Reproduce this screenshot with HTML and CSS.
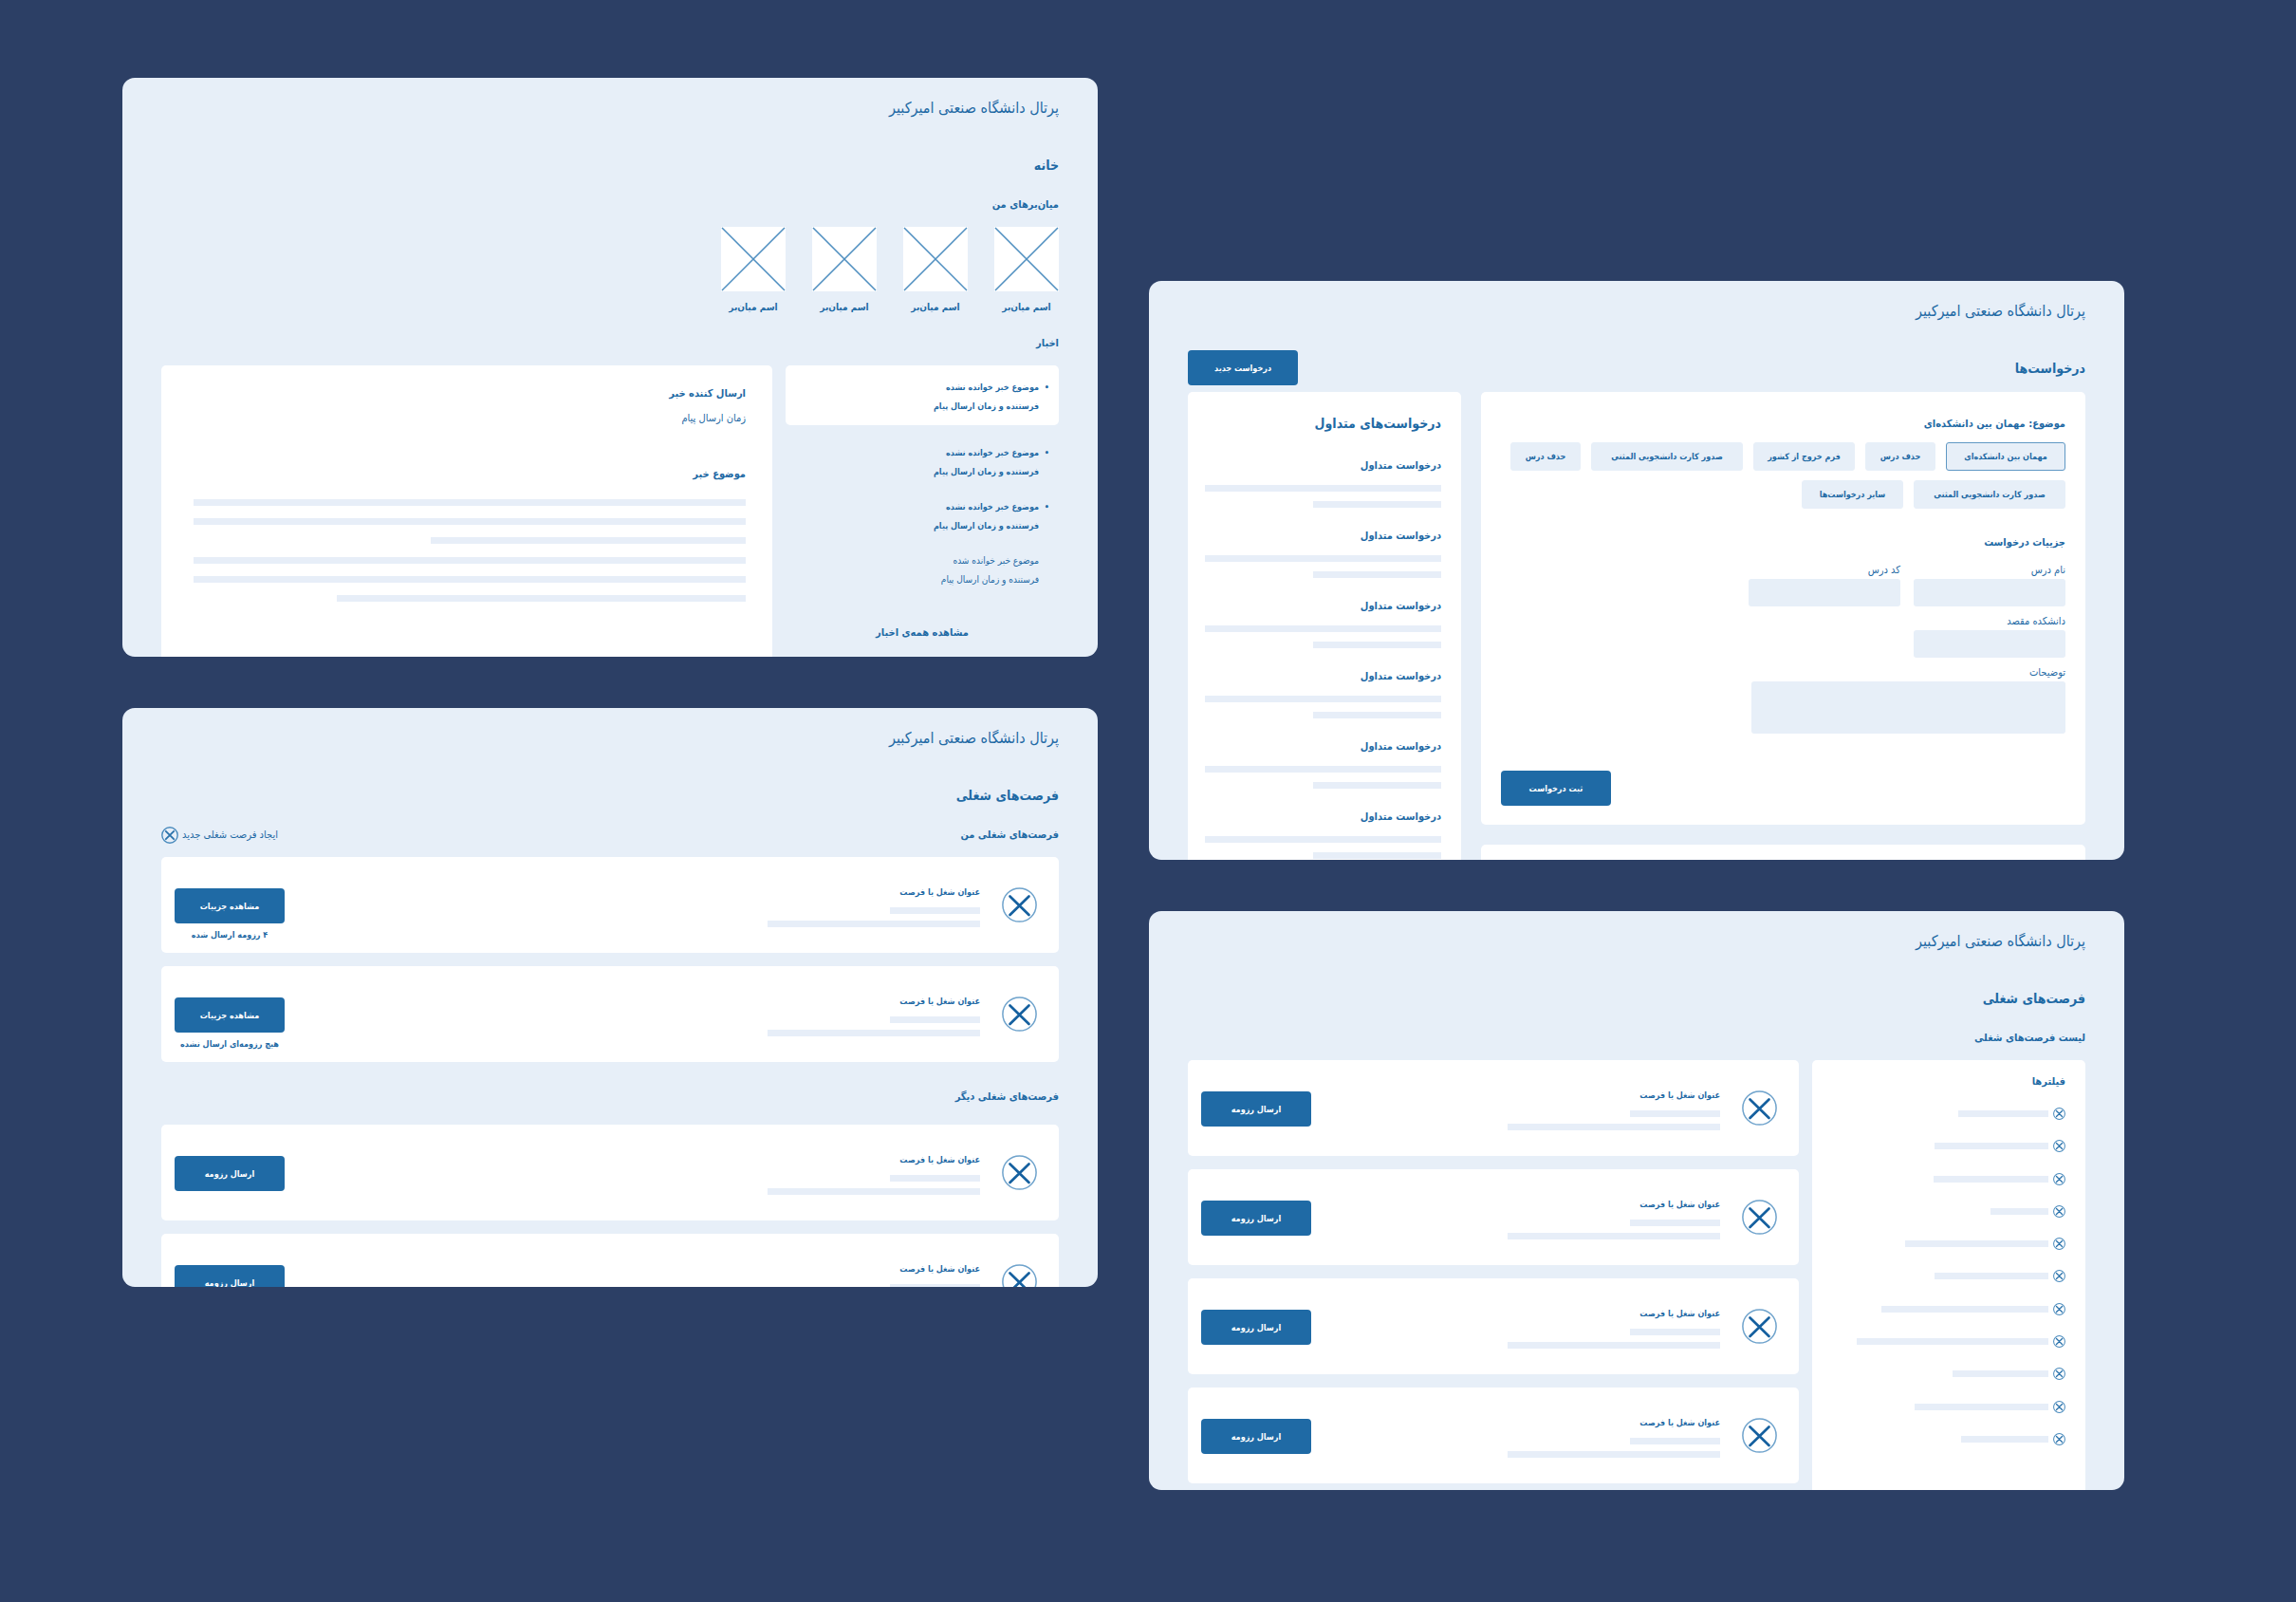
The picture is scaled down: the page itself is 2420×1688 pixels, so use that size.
FILE: index.html
```html
<!DOCTYPE html>
<html lang="fa" dir="rtl">
<head>
    <meta charset="UTF-8">
    <meta name="viewport" content="width=device-width, initial-scale=1.0">
    <title>پرتال دانشگاه صنعتی امیرکبیر</title>
    <link rel="stylesheet" href="styles.css">
</head>
<body>

    <svg class="defs" aria-hidden="true">
        <symbol id="cross" viewBox="0 0 37 37">
            <circle cx="18.5" cy="18.5" r="17.6" fill="none" stroke="#6fa3cc" stroke-width="1.5"/>
            <path d="M8.5 9.5 28.5 29M28.5 9.5 8.5 29" fill="none" stroke="#15609f" stroke-width="2.7" stroke-linecap="round"/>
        </symbol>
        <symbol id="cross-small" viewBox="0 0 18 18">
            <circle cx="9" cy="9" r="8.2" fill="none" stroke="#4a8bbd" stroke-width="1.4"/>
            <path d="M4.8 4.8 13.2 13.2M13.2 4.8 4.8 13.2" fill="none" stroke="#2a72ab" stroke-width="1.8" stroke-linecap="round"/>
        </symbol>
        <symbol id="placeholder" viewBox="0 0 68 68">
            <path d="M1 1 67 67M67 1 1 67" fill="none" stroke="#4f8fc0" stroke-width="1.5"/>
        </symbol>
    </svg>

    <main class="board">
        <div class="column column-low">

            <!-- Requests -->
            <section class="panel">
                <header class="portal-name">پرتال دانشگاه صنعتی امیرکبیر</header>
                <div class="page-head">
                    <h1>درخواست‌ها</h1>
                    <button class="btn" type="button">درخواست جدید</button>
                </div>
                <div class="requests">
                    <div class="requests-main">
                        <form class="card request-form">
                            <h2>موضوع: مهمان بین دانشکده‌ای</h2>
                            <div class="chips">
                                <button class="chip chip-active" type="button">مهمان بین دانشکده‌ای</button>
                                <button class="chip chip-sm" type="button">حذف درس</button>
                                <button class="chip chip-md" type="button">فرم خروج از کشور</button>
                                <button class="chip chip-lg" type="button">صدور کارت دانشجویی المثنی</button>
                                <button class="chip chip-sm" type="button">حذف درس</button>
                                <button class="chip chip-lg" type="button">صدور کارت دانشجویی المثنی</button>
                                <button class="chip chip-md" type="button">سایر درخواست‌ها</button>
                            </div>
                            <h2>جزییات درخواست</h2>
                            <div class="fields">
                                <div class="field-row">
                                    <div class="field">
                                        <label for="course-name">نام درس</label>
                                        <input id="course-name" type="text">
                                    </div>
                                    <div class="field">
                                        <label for="course-code">کد درس</label>
                                        <input id="course-code" type="text">
                                    </div>
                                </div>
                                <div class="field">
                                    <label for="faculty">دانشکده مقصد</label>
                                    <input id="faculty" type="text">
                                </div>
                                <div class="field field-wide">
                                    <label for="notes">توضیحات</label>
                                    <textarea id="notes"></textarea>
                                </div>
                            </div>
                            <button class="btn btn-submit" type="submit">ثبت درخواست</button>
                        </form>
                        <div class="card card-next"></div>
                    </div>
                    <aside class="card common">
                        <h2 class="common-title">درخواست‌های متداول</h2>
                        <ul class="common-list">
                            <li><h3>درخواست متداول</h3><span class="bar"></span><span class="bar bar-short"></span></li>
                            <li><h3>درخواست متداول</h3><span class="bar"></span><span class="bar bar-short"></span></li>
                            <li><h3>درخواست متداول</h3><span class="bar"></span><span class="bar bar-short"></span></li>
                            <li><h3>درخواست متداول</h3><span class="bar"></span><span class="bar bar-short"></span></li>
                            <li><h3>درخواست متداول</h3><span class="bar"></span><span class="bar bar-short"></span></li>
                            <li><h3>درخواست متداول</h3><span class="bar"></span><span class="bar bar-short"></span></li>
                        </ul>
                    </aside>
                </div>
            </section>

            <!-- Job list with filters -->
            <section class="panel">
                <header class="portal-name">پرتال دانشگاه صنعتی امیرکبیر</header>
                <div class="page-head">
                    <h1>فرصت‌های شغلی</h1>
                </div>
                <h2 class="section-title">لیست فرصت‌های شغلی</h2>
                <div class="split">
                    <aside class="card filters">
                        <h3>فیلترها</h3>
                        <ul>
                            <li><svg class="icon-xs"><use href="#cross-small"/></svg><span class="bar" style="width: 95px"></span></li>
                            <li><svg class="icon-xs"><use href="#cross-small"/></svg><span class="bar" style="width: 120px"></span></li>
                            <li><svg class="icon-xs"><use href="#cross-small"/></svg><span class="bar" style="width: 121px"></span></li>
                            <li><svg class="icon-xs"><use href="#cross-small"/></svg><span class="bar" style="width: 61px"></span></li>
                            <li><svg class="icon-xs"><use href="#cross-small"/></svg><span class="bar" style="width: 151px"></span></li>
                            <li><svg class="icon-xs"><use href="#cross-small"/></svg><span class="bar" style="width: 120px"></span></li>
                            <li><svg class="icon-xs"><use href="#cross-small"/></svg><span class="bar" style="width: 176px"></span></li>
                            <li><svg class="icon-xs"><use href="#cross-small"/></svg><span class="bar" style="width: 202px"></span></li>
                            <li><svg class="icon-xs"><use href="#cross-small"/></svg><span class="bar" style="width: 101px"></span></li>
                            <li><svg class="icon-xs"><use href="#cross-small"/></svg><span class="bar" style="width: 141px"></span></li>
                            <li><svg class="icon-xs"><use href="#cross-small"/></svg><span class="bar" style="width: 92px"></span></li>
                        </ul>
                    </aside>
                    <div class="jobs">
                        <article class="card job">
                            <svg class="icon"><use href="#cross"/></svg>
                            <div class="job-text"><h3>عنوان شغل یا فرصت</h3><span class="bar"></span><span class="bar bar-long"></span></div>
                            <div class="job-action"><button class="btn" type="button">ارسال رزومه</button></div>
                        </article>
                        <article class="card job">
                            <svg class="icon"><use href="#cross"/></svg>
                            <div class="job-text"><h3>عنوان شغل یا فرصت</h3><span class="bar"></span><span class="bar bar-long"></span></div>
                            <div class="job-action"><button class="btn" type="button">ارسال رزومه</button></div>
                        </article>
                        <article class="card job">
                            <svg class="icon"><use href="#cross"/></svg>
                            <div class="job-text"><h3>عنوان شغل یا فرصت</h3><span class="bar"></span><span class="bar bar-long"></span></div>
                            <div class="job-action"><button class="btn" type="button">ارسال رزومه</button></div>
                        </article>
                        <article class="card job">
                            <svg class="icon"><use href="#cross"/></svg>
                            <div class="job-text"><h3>عنوان شغل یا فرصت</h3><span class="bar"></span><span class="bar bar-long"></span></div>
                            <div class="job-action"><button class="btn" type="button">ارسال رزومه</button></div>
                        </article>
                    </div>
                </div>
            </section>
        </div>

        <div class="column">

            <!-- Home -->
            <section class="panel">
                <header class="portal-name">پرتال دانشگاه صنعتی امیرکبیر</header>
                <div class="page-head">
                    <h1>خانه</h1>
                </div>
                <h2 class="section-title">میان‌برهای من</h2>
                <nav class="shortcuts">
                    <a href="#"><svg><use href="#placeholder"/></svg>اسم میان‌بر</a>
                    <a href="#"><svg><use href="#placeholder"/></svg>اسم میان‌بر</a>
                    <a href="#"><svg><use href="#placeholder"/></svg>اسم میان‌بر</a>
                    <a href="#"><svg><use href="#placeholder"/></svg>اسم میان‌بر</a>
                </nav>
                <h2 class="section-title section-news">اخبار</h2>
                <div class="split">
                    <div class="news-side">
                        <ul class="news-list">
                            <li class="card selected unread"><p>موضوع خبر خوانده نشده</p><p>فرستنده و زمان ارسال پیام</p></li>
                            <li class="unread"><p>موضوع خبر خوانده نشده</p><p>فرستنده و زمان ارسال پیام</p></li>
                            <li class="unread"><p>موضوع خبر خوانده نشده</p><p>فرستنده و زمان ارسال پیام</p></li>
                            <li><p>موضوع خبر خوانده شده</p><p>فرستنده و زمان ارسال پیام</p></li>
                        </ul>
                        <a class="more" href="#">مشاهده همه‌ی اخبار</a>
                    </div>
                    <article class="card news-body">
                        <h3>ارسال کننده خبر</h3>
                        <p class="news-time">زمان ارسال پیام</p>
                        <h3>موضوع خبر</h3>
                        <div class="lines">
                            <span class="bar"></span>
                            <span class="bar"></span>
                            <span class="bar" style="width: 57%"></span>
                        </div>
                        <div class="lines">
                            <span class="bar"></span>
                            <span class="bar"></span>
                            <span class="bar" style="width: 74%"></span>
                        </div>
                    </article>
                </div>
            </section>

            <!-- My jobs -->
            <section class="panel">
                <header class="portal-name">پرتال دانشگاه صنعتی امیرکبیر</header>
                <div class="page-head">
                    <h1>فرصت‌های شغلی</h1>
                </div>
                <div class="section-row">
                    <h2 class="section-title">فرصت‌های شغلی من</h2>
                    <a class="create" href="#">ایجاد فرصت شغلی جدید<svg class="icon-sm"><use href="#cross-small"/></svg></a>
                </div>
                <div class="jobs">
                    <article class="card job">
                        <svg class="icon"><use href="#cross"/></svg>
                        <div class="job-text"><h3>عنوان شغل یا فرصت</h3><span class="bar"></span><span class="bar bar-long"></span></div>
                        <div class="job-action"><button class="btn" type="button">مشاهده جزییات</button><small>۴ رزومه ارسال شده</small></div>
                    </article>
                    <article class="card job">
                        <svg class="icon"><use href="#cross"/></svg>
                        <div class="job-text"><h3>عنوان شغل یا فرصت</h3><span class="bar"></span><span class="bar bar-long"></span></div>
                        <div class="job-action"><button class="btn" type="button">مشاهده جزییات</button><small>هیچ رزومه‌ای ارسال نشده</small></div>
                    </article>
                </div>
                <h2 class="section-title section-other">فرصت‌های شغلی دیگر</h2>
                <div class="jobs">
                    <article class="card job">
                        <svg class="icon"><use href="#cross"/></svg>
                        <div class="job-text"><h3>عنوان شغل یا فرصت</h3><span class="bar"></span><span class="bar bar-long"></span></div>
                        <div class="job-action"><button class="btn" type="button">ارسال رزومه</button></div>
                    </article>
                    <article class="card job">
                        <svg class="icon"><use href="#cross"/></svg>
                        <div class="job-text"><h3>عنوان شغل یا فرصت</h3><span class="bar"></span><span class="bar bar-long"></span></div>
                        <div class="job-action"><button class="btn" type="button">ارسال رزومه</button></div>
                    </article>
                </div>
            </section>
        </div>
    </main>

</body>
</html>
```
FILE: styles.css
```css
* {
    box-sizing: border-box;
}

body {
    margin: 0;
    background-color: #2c3f65;
    color: #1f6aa5;
    font-family: "DejaVu Sans Condensed", "DejaVu Sans", sans-serif;
    font-size: 10px;
    line-height: 20px;
}

h1, h2, h3, p, ul {
    margin: 0;
    padding: 0;
}

ul {
    list-style: none;
}

a {
    color: inherit;
    text-decoration: none;
}

button, input, textarea {
    font-family: inherit;
}

svg {
    display: block;
    flex: none;
}

.defs {
    position: absolute;
    width: 0;
    height: 0;
}

/* board */
.board {
    display: grid;
    grid-template-columns: 1fr 1fr;
    align-items: start;
    gap: 54px;
    padding: 82px 181px 82px 129px;
}

.column {
    display: flex;
    flex-direction: column;
    gap: 54px;
}

.column-low {
    padding-top: 214px;
}

.panel {
    aspect-ratio: 1028 / 610;
    min-height: 0;
    overflow: hidden;
    padding: 20px 41px 0;
    border-radius: 13px;
    background-color: #e7eff8;
}

.portal-name {
    font-size: 16px;
    line-height: 24px;
    margin-bottom: 29px;
}

.page-head {
    display: flex;
    justify-content: space-between;
    align-items: center;
    height: 37px;
}

h1 {
    font-size: 14px;
    line-height: 24px;
}

h2, h3 {
    font-size: 11px;
    line-height: 24px;
}

.section-title {
    margin: 12px 0 11px;
}

.card {
    border-radius: 5px;
    background-color: #fff;
}

.bar {
    display: block;
    height: 7px;
    background-color: #e7eef8;
}

.btn {
    width: 116px;
    height: 37px;
    padding: 0;
    border: none;
    border-radius: 4px;
    background-color: #1f6aa5;
    color: #fff;
    font-size: 9px;
    font-weight: bold;
    cursor: pointer;
}

.split {
    display: grid;
    grid-template-columns: 288px 1fr;
    gap: 14px;
}

/* home */
.shortcuts {
    display: flex;
    gap: 28px;
}

.shortcuts a {
    width: 68px;
    font-weight: bold;
    text-align: center;
    white-space: nowrap;
}

.shortcuts svg {
    width: 68px;
    height: 68px;
    margin-bottom: 7px;
    background-color: #fff;
}

.section-news {
    margin-top: 16px;
}

.news-list {
    display: flex;
    flex-direction: column;
    gap: 17px;
}

.news-list li {
    padding: 0 21px;
}

.news-list .unread {
    font-size: 9px;
    font-weight: bold;
}

.news-list .selected {
    padding: 13px 21px 10px;
    margin-bottom: 2px;
}

.unread p:first-child::before {
    content: "•";
    position: absolute;
    margin-right: -11px;
}

.more {
    display: block;
    margin-top: 34px;
    font-size: 11px;
    font-weight: bold;
    line-height: 24px;
    text-align: center;
}

.news-body {
    padding: 18px 28px 80px 34px;
}

.news-time {
    margin: 4px 0 37px;
    font-size: 11px;
}

.lines {
    display: flex;
    flex-direction: column;
    gap: 13px;
    margin-top: 14px;
}

/* jobs */
.section-row {
    display: flex;
    justify-content: space-between;
    align-items: center;
}

.create {
    display: flex;
    align-items: center;
    gap: 4px;
    font-size: 11px;
}

.icon {
    width: 37px;
    height: 37px;
}

.icon-sm {
    width: 18px;
    height: 18px;
}

.icon-xs {
    width: 13px;
    height: 13px;
}

.jobs {
    display: flex;
    flex-direction: column;
    gap: 14px;
}

.job {
    display: flex;
    align-items: center;
    gap: 23px;
    height: 101px;
    padding: 0 23px 0 14px;
}

.job-text {
    display: flex;
    flex-direction: column;
    gap: 7px;
    width: 224px;
}

.job-text h3 {
    font-size: 9px;
    line-height: 18px;
}

.job-text .bar {
    width: 95px;
}

.job-text .bar-long {
    width: 224px;
}

.job-action {
    display: flex;
    flex-direction: column;
    align-items: center;
    align-self: flex-start;
    width: 116px;
    margin-right: auto;
    padding-top: 33px;
}

.job-action small {
    margin-top: 2px;
    font-size: 9px;
    font-weight: bold;
    white-space: nowrap;
}

.section-other {
    margin: 25px 0 17px;
}

.filters {
    padding: 11px 21px 60px;
}

.filters ul {
    display: flex;
    flex-direction: column;
    justify-content: space-between;
    height: 356px;
    margin-top: 15px;
}

.filters li {
    display: flex;
    align-items: center;
    gap: 5px;
}

/* requests */
.requests {
    display: grid;
    grid-template-columns: 1fr 288px;
    align-items: start;
    gap: 21px;
    margin-top: 7px;
}

.request-form {
    display: flex;
    flex-direction: column;
    padding: 22px 21px 20px;
}

.chips {
    display: flex;
    flex-wrap: wrap;
    gap: 10px 11px;
    margin: 7px 0 24px;
}

.chip {
    width: 126px;
    height: 30px;
    padding: 0;
    border: 1px solid #e7eff8;
    border-radius: 3px;
    background-color: #e7eff8;
    color: inherit;
    font-size: 9px;
    font-weight: bold;
    white-space: nowrap;
    cursor: pointer;
}

.chip-active {
    border-color: #6098c4;
}

.chip-sm {
    width: 74px;
}

.chip-md {
    width: 107px;
}

.chip-lg {
    width: 160px;
}

.fields {
    display: flex;
    flex-direction: column;
    gap: 7px;
    margin-top: 8px;
}

.field-row {
    display: flex;
    gap: 14px;
}

.field {
    display: flex;
    flex-direction: column;
    width: 160px;
    font-size: 11px;
    line-height: 18px;
}

.field-wide {
    width: 331px;
}

.field input, .field textarea {
    width: 100%;
    height: 29px;
    padding: 4px 8px;
    border: none;
    border-radius: 3px;
    background-color: #e7eff8;
    color: inherit;
    font-size: 11px;
    resize: none;
}

.field textarea {
    height: 55px;
}

.btn-submit {
    align-self: flex-end;
    margin-top: 39px;
}

.card-next {
    height: 60px;
    margin-top: 21px;
}

.common {
    padding: 21px 21px 20px 18px;
}

.common-title {
    font-size: 14px;
}

.common-list {
    display: flex;
    flex-direction: column;
    gap: 18px;
    margin-top: 21px;
}

.common-list .bar {
    margin-top: 8px;
}

.common-list .bar-short {
    width: 135px;
    margin-top: 10px;
}
```
